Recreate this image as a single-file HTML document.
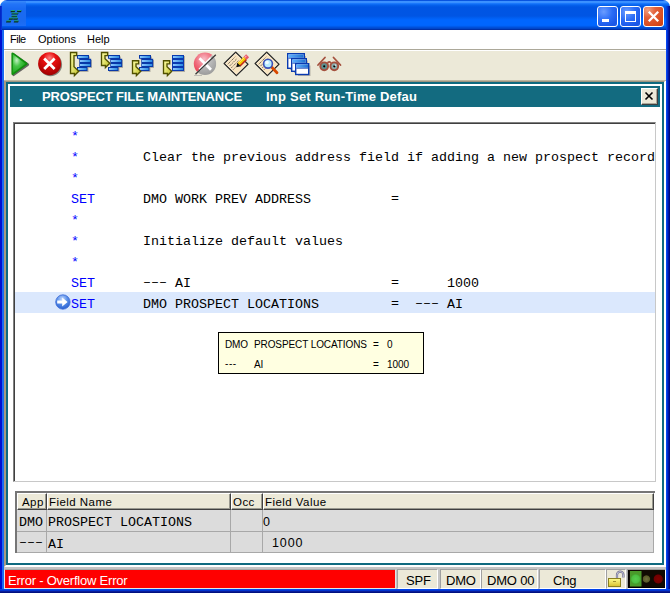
<!DOCTYPE html>
<html><head><meta charset="utf-8">
<style>
*{margin:0;padding:0;box-sizing:border-box}
html,body{width:670px;height:593px;overflow:hidden;background:#fff;font-family:"Liberation Sans",sans-serif}
.a{position:absolute}
#title{left:0;top:0;width:670px;height:30px;border-radius:7px 7px 0 0;background:linear-gradient(to bottom,#0854e0 0,#0854e0 1px,#3d92ff 1px,#3a90ff 2.5px,#1a78fc 3.5px,#0562ee 5px,#0055e3 7px,#0055e4 16px,#005ff2 18px,#0066ff 20px,#0066ff 25px,#0062f8 26px,#0052de 27px,#004cd4 28px,#0040c0 29px,#0030a8 29px,#0030a8 30px)}
#ticon{left:1px;top:1px;width:25px;height:25px;background:linear-gradient(to bottom,#3a8af8 0,#2274f8 3px,#1a6af2 8px,#1a6af0 20px,#1c6ef8 25px);border-radius:6px 0 0 0}
.cb{top:6px;width:21px;height:21px;border:1px solid #fff;border-radius:3px}
#bmin,#bmax{background:radial-gradient(circle at 30% 25%,#6a9cff 0%,#2a6cf6 45%,#1a56e6 80%,#1e5ee8 100%)}
#bcls{background:radial-gradient(circle at 20% 15%,#f0a080 0%,#e2603a 35%,#d84a1c 75%,#c83c10 100%)}
#lb{left:0;top:30px;width:4px;height:563px;background:linear-gradient(to right,#0010d0 0,#0010d0 2px,#1a6af2 2px,#1a6af2 4px)}
#rb{left:666px;top:30px;width:4px;height:563px;background:linear-gradient(to right,#0846f0 0,#0846f0 1px,#0030d0 1px,#0030d0 2px,#0018a8 2px,#0018a8 3px,#000a80 3px)}
#bb{left:0;top:589px;width:670px;height:4px;background:linear-gradient(to bottom,#0042ea 0,#0042ea 1px,#0034d0 1px,#0034d0 2px,#0a1c98 2px,#0a1c98 3px,#001080 3px)}
#menu{left:4px;top:30px;width:662px;height:19px;background:#fff;font-size:11px;color:#000}
#menu span{position:absolute;top:4px;line-height:11px}
#mline{left:4px;top:49px;width:662px;height:1px;background:#aca899}
#mline2{left:4px;top:50px;width:662px;height:1px;background:#fff}
#tool{left:4px;top:51px;width:662px;height:30px;background:#ece9d8}
#client{left:4px;top:80px;width:662px;height:487px;border-left:2px solid #a59a82;border-top:2px solid #9d9480;border-right:2px solid #fff;border-bottom:2px solid #fff;background:#808080}
#child{left:6px;top:82px;width:658px;height:483px;border:2px solid #0f6a80;background:#fff}
#ctitle{left:10px;top:86px;width:650px;height:21px;background:#136b80;color:#fff;font-weight:bold;font-size:13px}
#ctitle span{position:absolute;top:4px;line-height:13px}
#cclose{left:641px;top:88px;width:17px;height:17px;background:#ece9d8;border-top:1px solid #fff;border-left:1px solid #fff;border-right:1px solid #404040;border-bottom:1px solid #404040;box-shadow:inset -1px -1px 0 #aca899}
#code{left:13px;top:122px;width:643px;height:360px;border-top:1px solid #808080;border-left:1px solid #808080;border-right:1px solid #c8c8c8;border-bottom:1px solid #c8c8c8;background:#fff;overflow:hidden}
#codein{position:absolute;left:0;top:0;right:0;bottom:0;border-top:1px solid #404040;border-left:1px solid #404040}
.ln{position:absolute;left:0;width:641px;height:21px;font-family:"Liberation Mono",monospace;font-size:13.33px;white-space:pre;color:#000}
.ln span{position:absolute;top:6px;line-height:13px}
.b{color:#0000ff}
.eq{transform:translateY(-1px)}
#sel{background:#dbe8fd}
#tip{left:218px;top:332px;width:206px;height:42px;background:#ffffe1;border:1px solid #000;font-size:10px;letter-spacing:-0.1px;color:#000}
#tip span{position:absolute;line-height:11px}
#grid{left:15px;top:491px;width:640px;height:62px;border-top:2px solid #767676;border-left:2px solid #767676}
.hd{top:493px;height:17px;background:#ece9d8;border-top:1px solid #fff;border-left:1px solid #fff;border-right:1px solid #404040;border-bottom:1px solid #404040;box-shadow:inset -1px -1px 0 #9a9a90;font-size:11.5px;letter-spacing:0.45px;color:#000}
.hd span{position:absolute;top:2px;line-height:12px}
.rw{height:22px;background:#dcdcdc;border-right:1px solid #a8a8a8;border-bottom:1px solid #a8a8a8}
.rw span{position:absolute;line-height:13px;top:6px}
.ss{font-size:12.5px;letter-spacing:0.9px}
.mono{font-family:"Liberation Mono",monospace;font-size:13.33px}
#status{left:4px;top:567px;width:662px;height:22px;background:#c4c4c4}
.sp{position:absolute;top:569px;height:20px;background:#ece9d8;border-top:1px solid #a0a0a0;border-left:1px solid #a0a0a0;border-right:1px solid #fff;border-bottom:1px solid #fff;font-size:13px;letter-spacing:-0.2px;color:#000}
.sp span{position:absolute;top:4px;line-height:13px}
</style></head><body>
<div id="title" class="a"></div>
<div id="ticon" class="a"></div>
<svg class="a" style="left:0;top:0" width="26" height="26" viewBox="0 0 26 26">
<g fill="#0a3020">
<path d="M11 10.6h4.2l-0.6 1.6h-4.2zM17.4 10.6h4.2l-0.6 1.6h-4.2zM11.9 13h6.6l-0.6 1.6h-6.6zM11.9 15.7h5.4l-0.6 1.6h-5.4zM9.3 18.1h4l-0.6 1.6h-4zM13.7 18.1h4.4l-0.6 1.6h-4.4zM6.6 20.8h4.6l-0.6 1.6h-4.6zM14.3 20.8h4.4l-0.6 1.6h-4.4z"/>
</g>
<g fill="#1fa080">
<path d="M11 10.1h4.2l-0.4 1h-4.2zM17.4 10.1h4.2l-0.4 1h-4.2zM11.9 12.5h6.6l-0.4 1h-6.6zM11.9 15.2h5.4l-0.4 1h-5.4zM9.3 17.6h4l-0.4 1h-4zM13.7 17.6h4.4l-0.4 1h-4.4zM6.6 20.3h4.6l-0.4 1h-4.6zM14.3 20.3h4.4l-0.4 1h-4.4z"/>
</g>
</svg>
<div class="a" style="left:0;top:6px;width:2px;height:24px;background:linear-gradient(to right,#0020c0,#0838d8)"></div>
<div class="a" style="left:666px;top:6px;width:4px;height:24px;background:linear-gradient(to right,#0846e8,#0030c8 40%,#0018a0 70%,#000c88)"></div>
<div id="bmin" class="a cb" style="left:597px"></div>
<div id="bmax" class="a cb" style="left:620px"></div>
<div id="bcls" class="a cb" style="left:643px"></div>
<div class="a" style="left:602px;top:19px;width:7px;height:3px;background:#fff"></div>
<div class="a" style="left:625px;top:11px;width:11px;height:11px;border:1px solid #fff;border-top:3px solid #fff"></div>
<svg class="a" style="left:643px;top:6px" width="21" height="21" viewBox="0 0 21 21"><path d="M5.8 5.8L15.2 15.2M15.2 5.8L5.8 15.2" stroke="#fff" stroke-width="2.3" stroke-linecap="butt"/></svg>
<div id="lb" class="a"></div>
<div id="rb" class="a"></div>
<div id="bb" class="a"></div>
<div id="menu" class="a"><span style="left:6px;letter-spacing:-0.5px">File</span><span style="left:34px">Options</span><span style="left:83px">Help</span></div>
<div id="mline" class="a"></div>
<div id="mline2" class="a"></div>
<div id="tool" class="a"></div>
<svg class="a" style="left:0;top:48px" width="350" height="32" viewBox="0 48 350 32">
<defs>
<radialGradient id="gplay" cx="0.3" cy="0.32" r="0.8"><stop offset="0" stop-color="#c0f0c0"/><stop offset="0.4" stop-color="#48c448"/><stop offset="1" stop-color="#14a014"/></radialGradient>
<radialGradient id="gred" cx="0.5" cy="0.25" r="0.75"><stop offset="0" stop-color="#ff8080"/><stop offset="0.35" stop-color="#e81010"/><stop offset="1" stop-color="#a00000"/></radialGradient>
<linearGradient id="gbar" x1="0" y1="0" x2="1" y2="0"><stop offset="0" stop-color="#8cc8ff"/><stop offset="1" stop-color="#2a8ae0"/></linearGradient>
<linearGradient id="gwin" x1="0" y1="0" x2="1" y2="0"><stop offset="0" stop-color="#60b0ff"/><stop offset="1" stop-color="#2070d0"/></linearGradient>
<linearGradient id="gyel" x1="0" y1="0" x2="1" y2="0.6"><stop offset="0" stop-color="#ffffa8"/><stop offset="1" stop-color="#c8c838"/></linearGradient>
<g id="bars">
<path d="M11.5 5.5h11.5v3.5h2v8h-3.5v4h-10.5v-4h2v-8h-1.5z" fill="#000" opacity="0.25" transform="translate(1,1)"/>
<path d="M11 5h12v3.8h2.2v8.2h-3.7v4h-10.5v-4h2.3v-8.2h-2.3z" fill="#0838a8"/>
<rect x="12" y="6" width="10" height="2" fill="url(#gbar)"/>
<rect x="14" y="10" width="10.2" height="2" fill="url(#gbar)"/>
<rect x="14" y="14" width="10.2" height="2" fill="url(#gbar)"/>
<rect x="12" y="18" width="8.5" height="2" fill="url(#gbar)"/>
</g>
<g id="bars2">
<rect x="14" y="6" width="12" height="16" fill="#000" opacity="0.25"/>
<rect x="13" y="5" width="12" height="16" fill="#0a3ab0"/>
<rect x="14" y="6" width="10" height="2" fill="url(#gbar)"/>
<rect x="14" y="10" width="10" height="2" fill="url(#gbar)"/>
<rect x="14" y="14" width="10" height="2" fill="url(#gbar)"/>
<rect x="14" y="18" width="10" height="2" fill="url(#gbar)"/>
</g>
<path id="brk1" d="M4.5 2.5H10.7V5.6H8V16.8L12.8 21.2L8.4 25.6V23.5H4.5Z" fill="url(#gyel)" stroke="#505000" stroke-width="1.35" stroke-linejoin="miter"/>
<path id="brk2" d="M4.5 2.5H10.7V5.6H8V8.8L12.8 13.2L8.4 17.6V15.5H4.5Z" fill="url(#gyel)" stroke="#505000" stroke-width="1.35" stroke-linejoin="miter"/>
<path id="brk3" d="M4.5 10.7H10.7V13.8H8V16.8L12.8 21.2L8.4 25.6V23.5H4.5Z" fill="url(#gyel)" stroke="#505000" stroke-width="1.35" stroke-linejoin="miter"/>
<g id="doc">
<path d="M12.7 1.2L24.9 13.2L13.4 24.6L1.2 12.5Z" fill="#f8e4c0" stroke="#2a2a2a" stroke-width="1.4" stroke-linejoin="round"/>
<path d="M12.7 2.6L23.5 13.2L13.4 23.2L2.6 12.5Z" fill="none" stroke="#fff4e0" stroke-width="0.8"/>
<path d="M4.8 13.2L12.2 5.8M6.6 15L14 7.6M8.4 16.8L15.8 9.4M10.2 18.6L13.5 15.3" stroke="#5a5248" stroke-width="1" stroke-dasharray="1.1 0.9"/>
</g>
</defs>
<!-- play -->
<path d="M13.6 54.6L27.8 64.6L13.6 74.8Z" fill="#383838" opacity="0.75" stroke="#383838" stroke-width="2.6" stroke-linejoin="round"/>
<path d="M12.6 53.6L26.4 63.7L12.6 73.8Z" fill="#10900e" stroke="#10900e" stroke-width="2.4" stroke-linejoin="round"/>
<path d="M12.9 54.3L25.6 63.7L12.9 73.1Z" fill="url(#gplay)"/>
<!-- red x -->
<circle cx="50.5" cy="64.6" r="11.6" fill="#000" opacity="0.45"/>
<circle cx="49.6" cy="63.7" r="11.5" fill="url(#gred)"/>
<path d="M44.2 58.5L54.6 68.9M54.6 58.5L44.2 68.9" stroke="#fff" stroke-width="2.8"/>
<!-- bracket icons -->
<g transform="translate(66,50)"><use href="#bars"/><use href="#brk1"/></g>
<g transform="translate(97,50)"><use href="#bars"/><use href="#brk2"/></g>
<g transform="translate(128,50)"><use href="#bars"/><use href="#brk3"/></g>
<g transform="translate(159,50)"><use href="#bars2"/><use href="#brk3"/></g>
<!-- gray x -->
<clipPath id="cl1"><path d="M190 50H216.5L194 75.5Z"/></clipPath>
<clipPath id="cl2"><path d="M216.5 50V78H194Z"/></clipPath>
<radialGradient id="gpink" cx="0.45" cy="0.3" r="0.7"><stop offset="0" stop-color="#f8c0c8"/><stop offset="0.5" stop-color="#f07080"/><stop offset="1" stop-color="#e83848"/></radialGradient>
<radialGradient id="ggray" cx="0.45" cy="0.3" r="0.75"><stop offset="0" stop-color="#d8d8d8"/><stop offset="0.6" stop-color="#b0b0b0"/><stop offset="1" stop-color="#989898"/></radialGradient>
<circle cx="205" cy="63.8" r="11.2" fill="url(#gpink)" clip-path="url(#cl1)"/>
<circle cx="205" cy="63.8" r="11.2" fill="url(#ggray)" clip-path="url(#cl2)"/>
<path d="M199.5 58.3L211 69.8M211 58.3L199.5 69.8" stroke="#fff" stroke-width="2.8"/>
<path d="M195.5 74.3L215.8 54.8" stroke="#383838" stroke-width="1.3"/>
<path d="M194 75.6L202 75.6" stroke="#888" stroke-width="0.8" opacity="0.6"/>
<!-- pencil doc -->
<g transform="translate(223,51)"><use href="#doc"/></g>
<path d="M239 65L245.5 58.5" stroke="#c02818" stroke-width="4.4"/>
<path d="M238.4 64.4L244.9 57.9" stroke="#f8c800" stroke-width="3"/>
<path d="M238.6 63.2L244 57.8" stroke="#fff080" stroke-width="0.9"/>
<path d="M245.2 58.2L247.6 55.8" stroke="#e85868" stroke-width="4.2"/>
<path d="M244.6 57.6L246.4 55.8" stroke="#ffb0b0" stroke-width="1.2"/>
<path d="M236.3 67.3L237.3 62.8L240.8 66.3Z" fill="#101010"/>
<!-- magnifier doc -->
<g transform="translate(254,51)"><use href="#doc"/></g>
<path d="M272 67.5L277 72.8" stroke="#d84800" stroke-width="2.8" stroke-linecap="round"/>
<circle cx="268" cy="63.7" r="4.4" fill="#b8ecff" stroke="#3a50b8" stroke-width="1.6"/>
<circle cx="267" cy="62.5" r="1.8" fill="#fff" opacity="0.8"/>
<!-- windows -->
<g fill="#000" opacity="0.22">
<rect x="290" y="56" width="16" height="14"/>
<rect x="294" y="60.5" width="14" height="12.5"/>
<rect x="298" y="65.5" width="12.5" height="10.5"/>
</g>
<g stroke="#0a3ab0" stroke-width="1.4">
<rect x="287.7" y="53.7" width="16.6" height="14.6" fill="#fff"/>
<rect x="291.7" y="58.7" width="14.6" height="12.6" fill="#fff"/>
<rect x="295.7" y="63.7" width="13" height="10.8" fill="#fff"/>
</g>
<rect x="288.4" y="54.4" width="15.2" height="3.4" fill="url(#gwin)"/>
<rect x="292.4" y="59.4" width="13.2" height="3.4" fill="url(#gwin)"/>
<rect x="296.4" y="64.4" width="11.6" height="3.4" fill="url(#gwin)"/>
<rect x="288.4" y="57.8" width="15.2" height="0.8" fill="#0a3ab0"/>
<rect x="292.4" y="62.8" width="13.2" height="0.8" fill="#0a3ab0"/>
<rect x="296.4" y="67.8" width="11.6" height="0.8" fill="#0a3ab0"/>
<!-- glasses -->
<g stroke="#a4503e" fill="none" stroke-width="1.8" stroke-linecap="round">
<path d="M318 65L325 57.5M340.5 65L333.5 57.5M328 62.5Q329.3 61.2 330.5 62.5"/>
</g>
<circle cx="324.2" cy="66.3" r="3.9" fill="#5e9090" stroke="#a4503e" stroke-width="1.9"/>
<circle cx="334.3" cy="66.3" r="3.9" fill="#8aacac" stroke="#a4503e" stroke-width="1.9"/>
<circle cx="324.2" cy="66.3" r="1.1" fill="#000"/>
<circle cx="334.3" cy="66.3" r="1.1" fill="#000"/>
<circle cx="335.4" cy="65.2" r="0.9" fill="#fff" opacity="0.6"/>
</svg>

<div id="client" class="a"></div>
<div id="child" class="a"></div>
<div class="a" style="left:4px;top:80px;width:662px;height:1px;background:#bdb5a0"></div>
<div class="a" style="left:4px;top:51px;width:1px;height:29px;background:#fffbf0"></div>
<div id="ctitle" class="a"><span style="left:9px">.</span><span style="left:32px;letter-spacing:-0.12px">PROSPECT FILE MAINTENANCE</span><span style="left:256px;letter-spacing:0.22px">Inp Set Run-Time Defau</span></div>
<div id="cclose" class="a"></div>
<svg class="a" style="left:641px;top:88px" width="17" height="17" viewBox="0 0 17 17"><path d="M4.5 4.5L11.5 11.5M11.5 4.5L4.5 11.5" stroke="#000" stroke-width="1.6"/></svg>
<div id="code" class="a"><div id="codein">
<div class="ln" style="top:0px"><span class="b" style="left:56px">*</span></div>
<div class="ln" style="top:21px"><span class="b" style="left:56px">*</span><span style="left:128px">Clear the previous address field if adding a new prospect record</span></div>
<div class="ln" style="top:42px"><span class="b" style="left:56px">*</span></div>
<div class="ln" style="top:63px"><span class="b" style="left:56px">SET</span><span style="left:128px">DMO WORK PREV ADDRESS</span><span class="eq" style="left:376px">=</span></div>
<div class="ln" style="top:84px"><span class="b" style="left:56px">*</span></div>
<div class="ln" style="top:105px"><span class="b" style="left:56px">*</span><span style="left:128px">Initialize default values</span></div>
<div class="ln" style="top:126px"><span class="b" style="left:56px">*</span></div>
<div class="ln" style="top:147px"><span class="b" style="left:56px">SET</span><span style="left:128px"><b style="font-weight:normal;position:relative;top:-1px">–––</b> AI</span><span class="eq" style="left:376px">=</span><span style="left:432px">1000</span></div>
<div class="ln" id="sel" style="top:168px"><span class="b" style="left:56px">SET</span><span style="left:128px">DMO PROSPECT LOCATIONS</span><span class="eq" style="left:376px">=</span><span style="left:400px"><b style="font-weight:normal;position:relative;top:-1px">–––</b> AI</span></div>
</div></div>
<svg class="a" style="left:50px;top:290px" width="24" height="24" viewBox="50 290 24 24">
<defs><radialGradient id="garr" cx="0.45" cy="0.3" r="0.7"><stop offset="0" stop-color="#c8dcff"/><stop offset="0.5" stop-color="#5a90e8"/><stop offset="1" stop-color="#2a60d0"/></radialGradient></defs>
<circle cx="62.9" cy="302" r="7.2" fill="url(#garr)" stroke="#3a6ad8" stroke-width="0.8"/>
<path d="M57.2 300.6H62.2V297.6L67.6 302L62.2 306.4V303.4H57.2Z" fill="#fff"/>
</svg>
<div id="tip" class="a">
<span style="left:6px;top:6px">DMO</span><span style="left:35px;top:6px">PROSPECT LOCATIONS</span><span style="left:154px;top:6px">=</span><span style="left:168px;top:6px">0</span>
<span style="left:6px;top:25px;letter-spacing:0.6px">---</span><span style="left:35px;top:26px">AI</span><span style="left:154px;top:26px">=</span><span style="left:168px;top:26px">1000</span>
</div>
<div id="grid" class="a"></div>
<div class="hd a" style="left:17px;width:30px"><span style="left:4px">App</span></div>
<div class="hd a" style="left:47px;width:184px"><span style="left:1px">Field Name</span></div>
<div class="hd a" style="left:231px;width:32px"><span style="left:1px">Occ</span></div>
<div class="hd a" style="left:263px;width:391px"><span style="left:1px">Field Value</span></div>
<div class="rw a" style="left:17px;top:510px;width:30px"><span class="mono" style="left:2px">DMO</span></div>
<div class="rw a" style="left:47px;top:510px;width:184px"><span class="mono" style="left:1px">PROSPECT LOCATIONS</span></div>
<div class="rw a" style="left:231px;top:510px;width:32px"></div>
<div class="rw a" style="left:263px;top:510px;width:391px"><span class="ss" style="left:0px;top:6px">0</span></div>
<div class="rw a" style="left:17px;top:532px;height:21px;width:30px"><span class="mono" style="left:2px;top:4px">–––</span></div>
<div class="rw a" style="left:47px;top:532px;height:21px;width:184px"><span class="mono" style="left:1px">AI</span></div>
<div class="rw a" style="left:231px;top:532px;height:21px;width:32px"></div>
<div class="rw a" style="left:263px;top:532px;height:21px;width:391px"><span class="ss" style="left:9px;top:5px">1000</span></div>
<div id="status" class="a"></div>
<div class="a" style="left:4px;top:569px;width:392px;height:20px;background:#ff0000;border-top:1px solid #a8a8a8;border-left:1px solid #dde4e4;border-right:1px solid #e0e4e4;border-bottom:1px solid #e0e4e4;color:#fff;font-size:13px;letter-spacing:-0.22px"><span style="position:absolute;left:3px;top:4px;line-height:13px">Error - Overflow Error</span></div>
<div class="sp" style="left:397px;width:41px"><span style="left:8px">SPF</span></div>
<div class="sp" style="left:440px;width:41px"><span style="left:5px">DMO</span></div>
<div class="sp" style="left:481px;width:57px"><span style="left:5px">DMO 00</span></div>
<div class="sp" style="left:539px;width:67px"><span style="left:13px">Chg</span></div>
<div class="sp" style="left:606px;width:20px"></div>
<svg class="a" style="left:600px;top:564px" width="30" height="26" viewBox="600 564 30 26">
<path d="M617 579V574.8A3.2 3.2 0 0 1 623.4 574.8V577.5" fill="none" stroke="#6a6a88" stroke-width="2.2"/>
<path d="M617 579V574.8A3.2 3.2 0 0 1 623.4 574.8V577.5" fill="none" stroke="#d8d8f0" stroke-width="0.8"/>
<defs><linearGradient id="glock" x1="0" y1="0" x2="0" y2="1"><stop offset="0" stop-color="#ffff90"/><stop offset="1" stop-color="#d8c030"/></linearGradient></defs>
<rect x="608.5" y="578.5" width="12" height="8" fill="url(#glock)" stroke="#8a8020" stroke-width="1"/>
<path d="M613 581.5h3" stroke="#a09030" stroke-width="1"/>
</svg>
<div class="sp" style="left:627px;width:39px;background:#120c02"></div>
<svg class="a" style="left:628px;top:569px" width="38" height="20" viewBox="628 569 38 20">
<defs><radialGradient id="ggr"><stop offset="0" stop-color="#58cc50"/><stop offset="0.7" stop-color="#4cc040"/><stop offset="1" stop-color="#409a28"/></radialGradient>
<radialGradient id="gol"><stop offset="0" stop-color="#707040"/><stop offset="0.8" stop-color="#5a5a28"/><stop offset="1" stop-color="#1a1a08"/></radialGradient>
<radialGradient id="grd"><stop offset="0" stop-color="#820000"/><stop offset="0.8" stop-color="#700000"/><stop offset="1" stop-color="#200000"/></radialGradient></defs>
<rect x="628" y="570" width="37" height="18" fill="#000"/>
<rect x="629" y="570" width="35.5" height="17" fill="#100a02"/>
<rect x="630" y="571" width="11.5" height="15.5" fill="#4a9a2a"/>
<circle cx="635.6" cy="579" r="5.3" fill="url(#ggr)"/>
<circle cx="646.4" cy="579" r="4" fill="url(#gol)"/>
<circle cx="658.2" cy="579" r="5" fill="url(#grd)"/>
</svg>
</body></html>
